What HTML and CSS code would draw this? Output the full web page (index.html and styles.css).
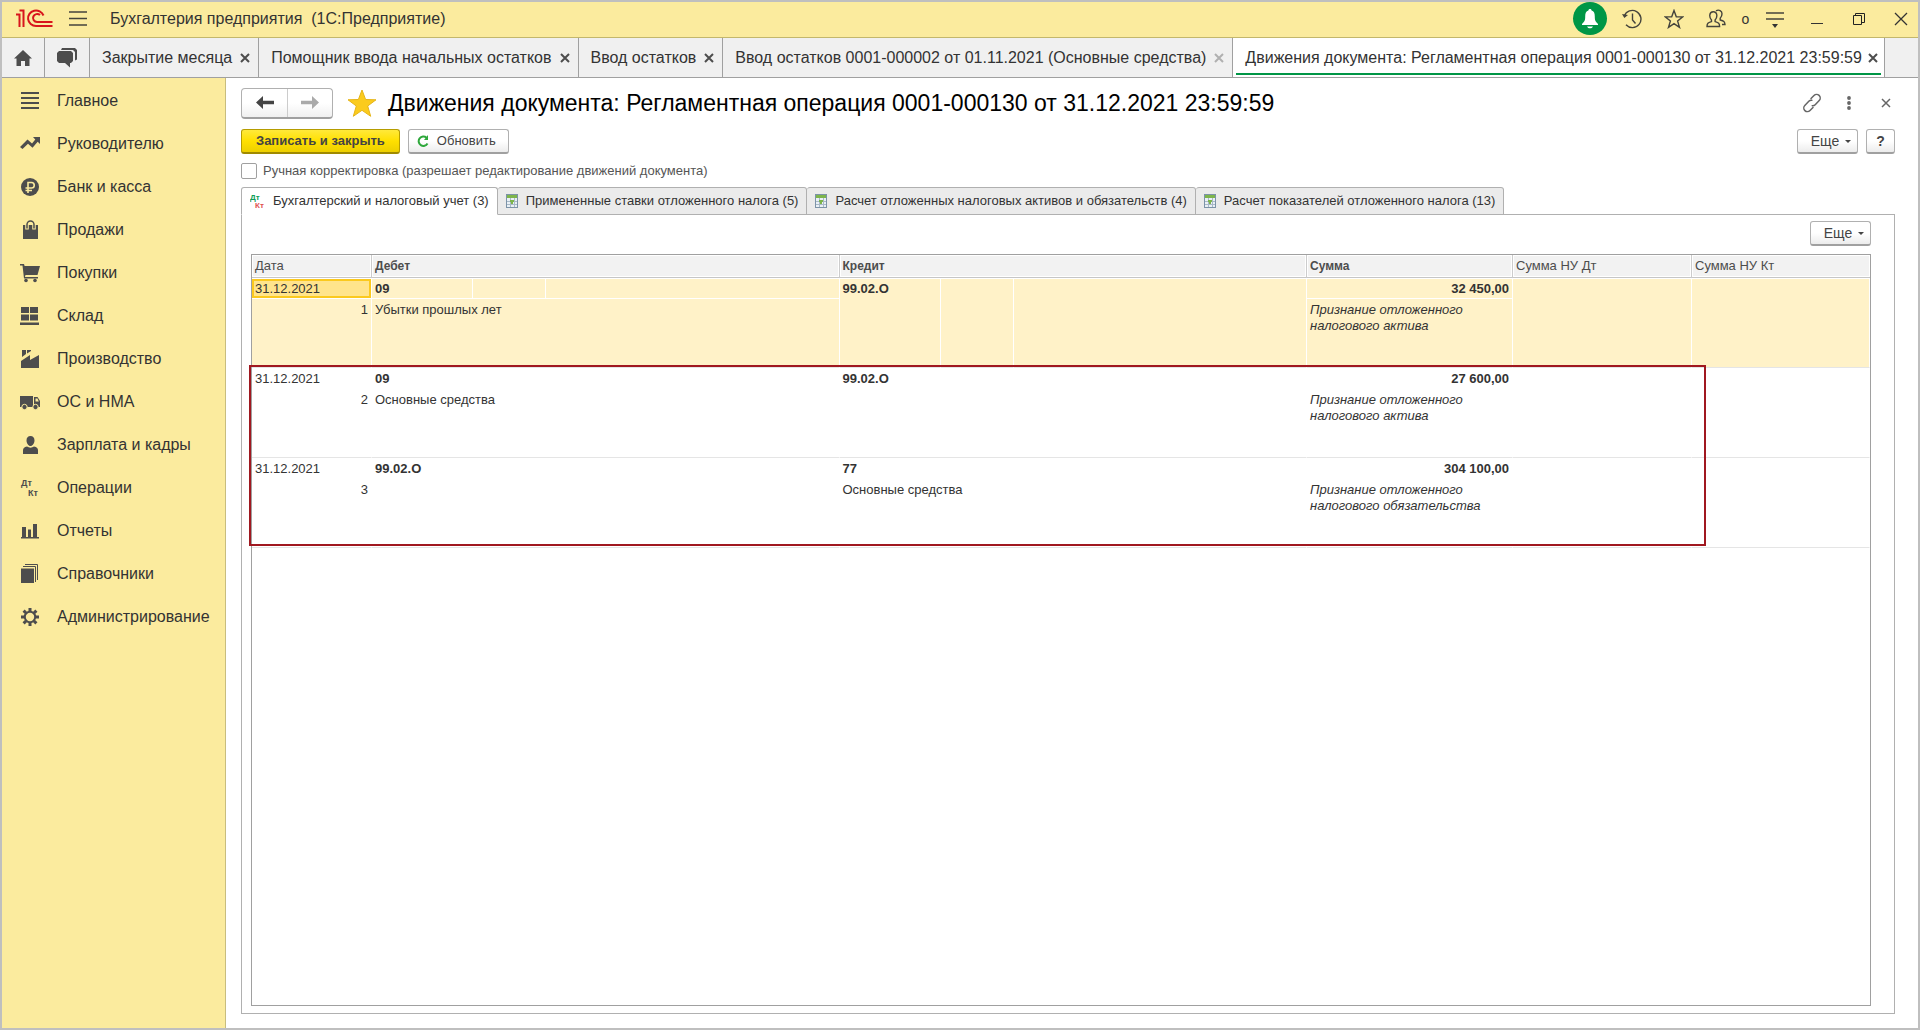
FILE: index.html
```html
<!DOCTYPE html>
<html lang="ru">
<head>
<meta charset="utf-8">
<title>Бухгалтерия предприятия (1С:Предприятие)</title>
<link rel="stylesheet" href="styles.css">
</head>
<body>
<svg class="sprite" aria-hidden="true">
  <symbol id="i-close" viewBox="0 0 10 10"><path d="M1 1l8 8M9 1l-8 8" stroke="currentColor" stroke-width="2" fill="none"/></symbol>
  <symbol id="i-sheet" viewBox="0 0 12 14"><path fill="#7c93a8" d="M0 0h12v14H0z"/><path fill="#e9f0f5" d="M1 4h10v9H1z"/><path stroke="#a9b9c7" fill="none" d="M4.500 4v9M8.500 4v9M1 7.500h10M1 10.500h10"/><path fill="#7db54c" d="M1 1h10v3H1zM4 6h4v2H7v2H5V8H4z"/></symbol>
</svg>
<div class="app">
  <header class="titlebar">
    <svg class="logo" width="38" height="19" viewBox="0 0 38 19" fill="none" stroke="#d8151c" stroke-width="2"><path d="M0 5.500h3.500V18M3.500 1.500h4V18M36.500 17H20a8 7.700 0 1 1 7.500-10.500M36.500 13H21a4.200 4 0 1 1 3-7"/></svg>
    <button class="plain burger" aria-label="Меню"><svg width="18" height="15" viewBox="0 0 18 15" stroke="#45443c" stroke-width="1.500"><path d="M0 1h18M0 7.500h18M0 14h18"/></svg></button>
    <h1 class="apptitle">Бухгалтерия предприятия&nbsp; (1С:Предприятие)</h1>
    <div class="tools">
      <button class="plain tool bell" aria-label="Уведомления"><svg width="16" height="20" viewBox="0 0 16 20" fill="#fff"><path d="M8 0c1 0 1.600.7 1.600 1.600C12 2.300 12.800 4.500 12.800 7.500c0 4 .6 5 3.200 7.500v1H0v-1c2.600-2.500 3.200-3.500 3.200-7.500 0-3 .8-5.200 3.200-5.900C6.400.7 7 0 8 0zM5 17.500h6c-.6 1.300-1.800 1.800-3 1.800s-2.400-.5-3-1.800z"/></svg></button>
      <button class="plain tool" aria-label="История"><svg width="20" height="20" viewBox="0 0 20 20" fill="none" stroke="#45443c" stroke-width="1.400"><path d="M2.300 7A8.600 8.600 0 1 1 4 15.800M10.500 4.500V11l3 3.500"/><path d="M0 5l2.300 4L6 6z" fill="#45443c" stroke="none"/></svg></button>
      <button class="plain tool" aria-label="Избранное"><svg width="20" height="20" viewBox="0 0 20 20" fill="none" stroke="#45443c" stroke-width="1.400"><path d="M10 1.500l2.300 6.200 6.500.2-5.200 4.100 1.900 6.400-5.500-3.800-5.500 3.800L6.400 12 1.200 7.900l6.500-.2z"/></svg></button>
      <button class="plain tool" aria-label="Пользователи"><svg width="20" height="20" viewBox="0 0 20 20" fill="none" stroke="#45443c" stroke-width="1.400"><path d="M1 17.500c0-3.500 1-3.800 4.500-5V11C4 9.500 3.600 8 3.800 6c.2-2 1.600-3.200 3.400-3.200S10.600 4 10.800 6c.2 2-.3 3.500-1.700 5v1.500c3.500 1.200 4.500 1.500 4.500 5zM10 1.800c3-1.800 6 .2 6 3 0 2.200-.5 3.200-1.800 4.500V11c3.600 1 4.600 1.500 4.800 4.500h-3"/></svg></button>
      <span class="count">o</span>
      <button class="plain tool" aria-label="Настройка"><svg width="18" height="18" viewBox="0 0 18 18"><path stroke="#45443c" stroke-width="1.500" d="M0 3h18M0 9h18"/><path fill="#333" d="M6 14h6l-3 4z"/></svg></button>
      <button class="plain tool" aria-label="Свернуть"><svg width="12" height="14" viewBox="0 0 12 14"><path stroke="#333" stroke-width="1" d="M0 11.500h12"/></svg></button>
      <button class="plain tool" aria-label="Восстановить"><svg width="12" height="12" viewBox="0 0 12 12" fill="none" stroke="#222"><path d="M.500 2.500h8v9h-8zM2.500 2.500v-2h9v9h-3"/></svg></button>
      <button class="plain tool" aria-label="Закрыть"><svg width="14" height="14" viewBox="0 0 14 14" stroke="#333" stroke-width="1.300"><path d="M1 1l12 12M13 1L1 13"/></svg></button>
    </div>
  </header>

  <nav class="tabs" aria-label="Открытые окна">
    <button class="plain tab icontab" aria-label="Начальная страница"><svg width="18" height="16" viewBox="0 0 18 16" fill="#4d4d4d"><path d="M9 0l9 8.500h-2.500V16H11v-5H7v5H2.500V8.500H0z"/></svg></button>
    <button class="plain tab icontab" aria-label="Обсуждения"><svg width="20" height="20" viewBox="0 0 20 20" fill="#4d4d4d"><path d="M5 0h13l2 2v9.500l-2 1V4l-2-2H4z"/><path d="M2 3h12l2 2v8l-2 2h-1v4.500L8 15H2l-2-2V5z"/></svg></button>
    <div class="tab"><a href="#">Закрытие месяца</a><button class="plain x" aria-label="Закрыть"><svg width="10" height="10"><use href="#i-close"/></svg></button></div>
    <div class="tab"><a href="#">Помощник ввода начальных остатков</a><button class="plain x" aria-label="Закрыть"><svg width="10" height="10"><use href="#i-close"/></svg></button></div>
    <div class="tab"><a href="#">Ввод остатков</a><button class="plain x" aria-label="Закрыть"><svg width="10" height="10"><use href="#i-close"/></svg></button></div>
    <div class="tab"><a href="#">Ввод остатков 0001-000002 от 01.11.2021 (Основные средства)</a><button class="plain x dim" aria-label="Закрыть"><svg width="10" height="10"><use href="#i-close"/></svg></button></div>
    <div class="tab current"><a href="#">Движения документа: Регламентная операция 0001-000130 от 31.12.2021 23:59:59</a><button class="plain x" aria-label="Закрыть"><svg width="10" height="10"><use href="#i-close"/></svg></button></div>
  </nav>

  <div class="body">
    <nav class="sidebar" aria-label="Разделы">
      <a href="#"><svg viewBox="0 0 20 20"><path d="M1 1h18v2H1zM1 6h18v2H1zM1 11h18v2H1zM1 16h18v2H1z"/></svg>Главное</a>
      <a href="#"><svg viewBox="0 0 20 20"><path d="M13 3h7v7l-2.300-2.300-5.200 6-4.500-4L2.500 15 0 13 7.500 5.500l4.500 4 3.300-4z"/></svg>Руководителю</a>
      <a href="#"><svg viewBox="0 0 20 20"><circle cx="10" cy="10" r="9"/><path fill="none" stroke="#fbeb9e" stroke-width="1.600" d="M8 16V5.500h3.500a2.700 2.700 0 0 1 0 5.500H5.500M5.500 13.500H12"/></svg>Банк и касса</a>
      <a href="#"><svg viewBox="0 0 20 20"><path d="M3 5h15v14H3z"/><path fill="none" stroke="#fbeb9e" stroke-width="3.500" d="M7 9.500V4.500M14 9.500V4.500"/><path fill="none" stroke="#4d4d4d" stroke-width="1.500" d="M7 8.500V4.500a3.500 3.500 0 0 1 7 0v4"/></svg>Продажи</a>
      <a href="#"><svg viewBox="0 0 20 20"><path d="M0 1h4l.6 2H20l-2.500 9H5.500l-.6 2H18v1.500H4L2.500 2.500H0z"/><circle cx="6" cy="17.500" r="1.800"/><circle cx="15" cy="17.500" r="1.800"/></svg>Покупки</a>
      <a href="#"><svg viewBox="0 0 20 20"><path d="M1 1h8v6H1zM10 1h8v6h-8zM1 8.500h8v6H1zM10 8.500h8v6h-8zM0 16.500h19V19H0z"/></svg>Склад</a>
      <a href="#"><svg viewBox="0 0 20 20"><path d="M1 19v-7l9-6v5l9-5v13zM2 1h4v4L2 8zM7 1h4v1L7 4.500z"/></svg>Производство</a>
      <a href="#"><svg viewBox="0 0 20 20"><path d="M0 4h13v11H0zM14 5h3.500L20 9v6h-6z"/><path fill="#fbeb9e" d="M15.500 6.500h2l1.300 3h-3.300z"/><g stroke="#fbeb9e"><circle cx="4.500" cy="15" r="2.700"/><circle cx="15.500" cy="15" r="2.700"/></g></svg>ОС и НМА</a>
      <a href="#"><svg viewBox="0 0 20 20"><path d="M10.500 1C13 1 14.500 2.700 14.500 5.500S12.500 11 10.500 11 6.500 8.300 6.500 5.500 8 1 10.500 1zM7 11.500c2 1.500 5 1.500 7 0 3 .5 4 2 4 4V19H3v-3.500c0-2 1-3.500 4-4z"/></svg>Зарплата и кадры</a>
      <a href="#"><svg viewBox="0 0 20 20" class="dtkt"><text x="1" y="8">Дт</text><text x="8" y="18">Кт</text></svg>Операции</a>
      <a href="#"><svg viewBox="0 0 20 20"><path d="M2 6h4v10h2V8.500h3V16h2V3h4v13h2v1.500H1V16h1z"/></svg>Отчеты</a>
      <a href="#"><svg viewBox="0 0 20 20"><path d="M1 4.500h13V19H1z"/><path fill="none" stroke="#4d4d4d" d="M3 2.500h12.500V18M5 .500h12.500V16"/></svg>Справочники</a>
      <a href="#"><svg viewBox="0 0 20 20" fill="none" stroke="#4d4d4d"><circle class="ring" cx="10" cy="10" r="5.200"/><path stroke-width="3" d="M10 1v3.500M10 15.500V19M1 10h3.500M15.500 10H19M3.600 3.600L6 6M14 14l2.400 2.400M16.400 3.600L14 6M6 14l-2.400 2.400"/></svg>Администрирование</a>
    </nav>

    <main class="content">
      <div class="heading">
        <div class="history">
          <button class="plain" aria-label="Назад"><svg width="18" height="13" viewBox="0 0 18 13" fill="#444"><path d="M0 6.500L7 0v4.800h11v3.400H7V13z"/></svg></button>
          <button class="plain" aria-label="Вперед"><svg width="18" height="13" viewBox="0 0 18 13" fill="#aaa"><path d="M18 6.500L11 0v4.800H0v3.400h11V13z"/></svg></button>
        </div>
        <svg class="star" width="30" height="28" viewBox="0 0 30 28"><path fill="#fbcb1d" stroke="#e5b417" d="M15 1l3.600 9.500 10.400.3-8.300 6.200 3 10.300L15 21.300l-8.700 6 3-10.300L1 10.800l10.400-.3z"/></svg>
        <h2>Движения документа: Регламентная операция 0001-000130 от 31.12.2021 23:59:59</h2>
        <div class="formtools">
          <button class="plain" aria-label="Ссылка"><svg width="20" height="20" viewBox="0 0 20 20" fill="none" stroke="#666" stroke-width="1.500" stroke-linecap="round"><path d="M9 5.500l3-3a3.600 3.600 0 0 1 5.200 5l-4 4.200a3.500 3.500 0 0 1-3 1M11 14.500l-3 3a3.600 3.600 0 0 1-5.200-5l4-4.200a3.500 3.500 0 0 1 3-1"/></svg></button>
          <button class="plain" aria-label="Действия"><svg width="4" height="14" viewBox="0 0 4 14" fill="#666"><circle cx="2" cy="2" r="1.900"/><circle cx="2" cy="7" r="1.900"/><circle cx="2" cy="12" r="1.900"/></svg></button>
          <button class="plain" aria-label="Закрыть"><svg width="10" height="10" viewBox="0 0 10 10" stroke="#666" stroke-width="1.500"><path d="M1 1l8 8M9 1L1 9"/></svg></button>
        </div>
      </div>

      <div class="commands">
        <button class="btn primary">Записать и закрыть</button>
        <button class="btn"><svg width="12" height="12" viewBox="0 0 12 12"><path fill="none" stroke="#2fa83c" stroke-width="2" d="M10.500 8.500A4.700 4.700 0 1 1 9.500 2.700"/><path fill="#2fa83c" d="M7 5h4V0z"/></svg>Обновить</button>
        <span class="grow"></span>
        <button class="btn more">Еще<i class="caret"></i></button>
        <button class="btn help">?</button>
      </div>

      <label class="manual"><input type="checkbox">Ручная корректировка (разрешает редактирование движений документа)</label>

      <div class="pages" role="tablist">
        <button class="page active" role="tab" aria-selected="true"><svg class="dtkt small" width="15" height="16" viewBox="0 0 15 16"><text class="dt" x="0" y="7">Дт</text><text class="kt" x="5" y="15">Кт</text></svg>Бухгалтерский и налоговый учет (3)</button>
        <button class="page" role="tab"><svg width="12" height="14"><use href="#i-sheet"/></svg>Примененные ставки отложенного налога (5)</button>
        <button class="page" role="tab"><svg width="12" height="14"><use href="#i-sheet"/></svg>Расчет отложенных налоговых активов и обязательств (4)</button>
        <button class="page" role="tab"><svg width="12" height="14"><use href="#i-sheet"/></svg>Расчет показателей отложенного налога (13)</button>
      </div>

      <section class="panel">
        <div class="panelbar"><button class="btn more">Еще<i class="caret"></i></button></div>
        <div class="grid">
          <table>
            <colgroup><col class="c-date"><col class="c-acc"><col class="c-sub"><col><col class="c-acc"><col class="c-sub"><col><col class="c-sum"><col class="c-nu"><col class="c-nu"></colgroup>
            <thead>
              <tr><th>Дата</th><th colspan="3" class="b">Дебет</th><th colspan="3" class="b">Кредит</th><th class="b">Сумма</th><th>Сумма НУ Дт</th><th>Сумма НУ Кт</th></tr>
            </thead>
            <tbody class="selected">
              <tr class="top"><td class="cursor">31.12.2021</td><td class="b">09</td><td></td><td></td><td rowspan="2" class="b">99.02.О</td><td rowspan="2"></td><td rowspan="2"></td><td class="b num">32 450,00</td><td rowspan="2"></td><td rowspan="2"></td></tr>
              <tr class="bottom"><td class="num">1</td><td colspan="3">Убытки прошлых лет</td><td class="note">Признание отложенного<br>налогового актива</td></tr>
            </tbody>
            <tbody>
              <tr class="top"><td>31.12.2021</td><td class="b">09</td><td></td><td></td><td class="b">99.02.О</td><td></td><td></td><td class="b num">27 600,00</td><td rowspan="2"></td><td rowspan="2"></td></tr>
              <tr class="bottom"><td class="num">2</td><td colspan="3">Основные средства</td><td colspan="3"></td><td class="note">Признание отложенного<br>налогового актива</td></tr>
            </tbody>
            <tbody>
              <tr class="top"><td>31.12.2021</td><td class="b">99.02.О</td><td></td><td></td><td class="b">77</td><td></td><td></td><td class="b num">304 100,00</td><td rowspan="2"></td><td rowspan="2"></td></tr>
              <tr class="bottom"><td class="num">3</td><td colspan="3"></td><td colspan="3">Основные средства</td><td class="note">Признание отложенного<br>налогового обязательства</td></tr>
            </tbody>
          </table>
          <div class="highlight"></div>
        </div>
      </section>
    </main>
  </div>
</div>
</body>
</html>
```
FILE: styles.css
```css
* { box-sizing: border-box; }
body { margin: 0; font: 13px/16px "Liberation Sans", Arial, sans-serif; color: #333; background: #fff; }
a { color: inherit; text-decoration: none; }
button { font: inherit; color: inherit; cursor: pointer; }
svg { display: block; flex: none; }
h1, h2 { margin: 0; font-weight: normal; }
.sprite { position: absolute; width: 0; height: 0; }
.plain { border: 0; padding: 0; background: none; display: flex; align-items: center; justify-content: center; }
.app { min-height: 100vh; display: flex; flex-direction: column; border: 2px solid #bfbfbf; }

.titlebar { display: flex; align-items: center; height: 36px; padding: 0 0 2px 14px; background: #fbeb9e; border-bottom: 1px solid #c3b76c; }
.burger { margin-left: 15px; }
.apptitle { margin-left: 23px; font-size: 16px; line-height: 20px; }
.tools { margin-left: auto; display: flex; align-items: center; gap: 8px; }
.tool { width: 34px; height: 33px; }
.bell { border-radius: 50%; background: #009646; }
.count { width: 9px; text-align: center; font-size: 14px; }

.tabs { display: flex; height: 40px; background: #f0f0f0; border-bottom: 1px solid #a0a0a0; font-size: 16px; line-height: 20px; }
.tab { display: flex; align-items: center; gap: 8px; padding: 0 8px 0 12px; border-right: 1px solid #a0a0a0; white-space: nowrap; }
.icontab { width: 45px; padding: 0; flex: none; border-right: 1px solid #a0a0a0; }
.icontab:first-child { width: 43px; }
.x { color: #4d4d4d; }
.x.dim { color: #b0b0b0; }
.current { gap: 6px; padding-right: 6px; background: linear-gradient(#009646, #009646) center bottom 2px / calc(100% - 6px) 2px no-repeat #fff; }

.body { flex: 1; display: flex; }
.sidebar { width: 224px; flex: none; padding-top: 1px; background: #fbeb9e; border-right: 1px solid #c8bd7e; }
.sidebar a { display: flex; align-items: center; gap: 17px; height: 43px; padding-left: 18px; font-size: 16px; line-height: 20px; }
.sidebar svg { width: 20px; height: 20px; fill: #4d4d4d; }
.sidebar .ring { fill: none; stroke-width: 2; }
.dtkt { font: bold 9px "Liberation Sans", Arial, sans-serif; }
.dtkt.small { font-size: 8px; }
.dt { fill: #0f9d58; }
.kt { fill: #e0524e; }

.content { flex: 1; min-width: 0; display: flex; flex-direction: column; padding: 10px 23px 14px 15px; }
.heading { display: flex; align-items: center; height: 30px; }
.history { display: flex; height: 31px; border: 1px solid #b0b0b0; border-bottom: 2px solid #a0a0a0; border-radius: 4px; background: linear-gradient(#fff 50%, #f0f0f0); }
.history button { width: 45px; }
.history button + button { border-left: 1px solid #ccc; }
.star { margin: 0 11px 0 14px; }
.heading h2 { font-size: 23px; line-height: 30px; color: #000; white-space: nowrap; }
.formtools { margin-left: auto; display: flex; align-items: center; gap: 19px; }
.formtools button { width: 18px; height: 20px; }

.commands { display: flex; gap: 8px; margin-top: 11px; }
.grow { flex: 1; }
.btn { display: flex; align-items: center; justify-content: center; height: 25px; padding: 0 12px 0 8px; gap: 8px; border: 1px solid #b0b0b0; border-bottom: 2px solid #a0a0a0; border-radius: 3px; background: linear-gradient(#fff 50%, #ececec); color: #444; }
.primary { padding: 0 14px; border-color: #b59c00; border-bottom-color: #a08a00; background: linear-gradient(#ffe93b, #ffe000 50%, #edcf00); font-weight: bold; }
.more { width: 61px; padding: 0 5px 0 12px; font-size: 14px; gap: 6px; }
.caret { border: 3px solid transparent; border-top-color: #444; border-bottom: 0; }
.help { width: 29px; padding: 0; font-weight: bold; font-size: 14px; }

.manual { display: flex; align-items: center; gap: 6px; height: 16px; margin-top: 9px; color: #555; }
.manual input { appearance: none; width: 16px; height: 16px; margin: 0; border: 1px solid #a0a0a0; border-radius: 2px; background: #fff; }

.pages { position: relative; z-index: 1; display: flex; height: 28px; margin-top: 8px; }
.page { display: flex; align-items: center; gap: 8px; padding: 0 8px; border: 1px solid #b0b0b0; border-left: 0; border-radius: 3px 3px 0 0; background: #ebebeb; white-space: nowrap; }
.page.active { border-left: 1px solid #b0b0b0; border-bottom-color: #fff; background: #fff; }

.panel { flex: 1; display: flex; flex-direction: column; margin-top: -1px; padding: 6px 23px 7px 9px; border: 1px solid #b0b0b0; }
.panelbar { display: flex; justify-content: flex-end; }
.grid { position: relative; flex: 1; margin-top: 8px; border: 1px solid #a0a0a0; }

table { width: 100%; table-layout: fixed; border-collapse: separate; border-spacing: 0; }
.c-date { width: 120px; }
.c-acc { width: 101px; }
.c-sub { width: 73px; }
.c-sum { width: 206px; }
.c-nu { width: 179px; }
.c-nu:last-child { width: 178px; }
th { height: 23px; padding: 0 3px; text-align: left; font-weight: normal; color: #4d4d4d; background: #f2f2f2; border-right: 1px solid #ccc; border-bottom: 1px solid #c6c6c6; box-shadow: inset 0 0 0 1px #fff; }
th:last-child { border-right: 0; }
td { padding: 0 3px; vertical-align: top; }
.b { font-weight: bold; }
th.b { font-size: 12px; }
.num { text-align: right; }
.note { font-style: italic; }
.top td { height: 21px; padding-top: 2px; border: 1px solid transparent; border-width: 1px 1px 1px 0; }
.bottom td { height: 69px; padding-top: 3px; border-right: 1px solid transparent; }
.bottom td, td[rowspan] { border-bottom: 1px solid #e5e5e5; }
.selected td { background: #fff2c8; border-color: #fff; }
.selected .bottom td, .selected td[rowspan] { border-bottom-color: #e5e5e5; }
.selected .cursor { background: #ffe48c; box-shadow: inset 0 0 0 2px #fbc91e; }
.highlight { position: absolute; top: 110px; left: -3px; right: 164px; height: 181px; border: 2px solid #a01820; pointer-events: none; }
```
